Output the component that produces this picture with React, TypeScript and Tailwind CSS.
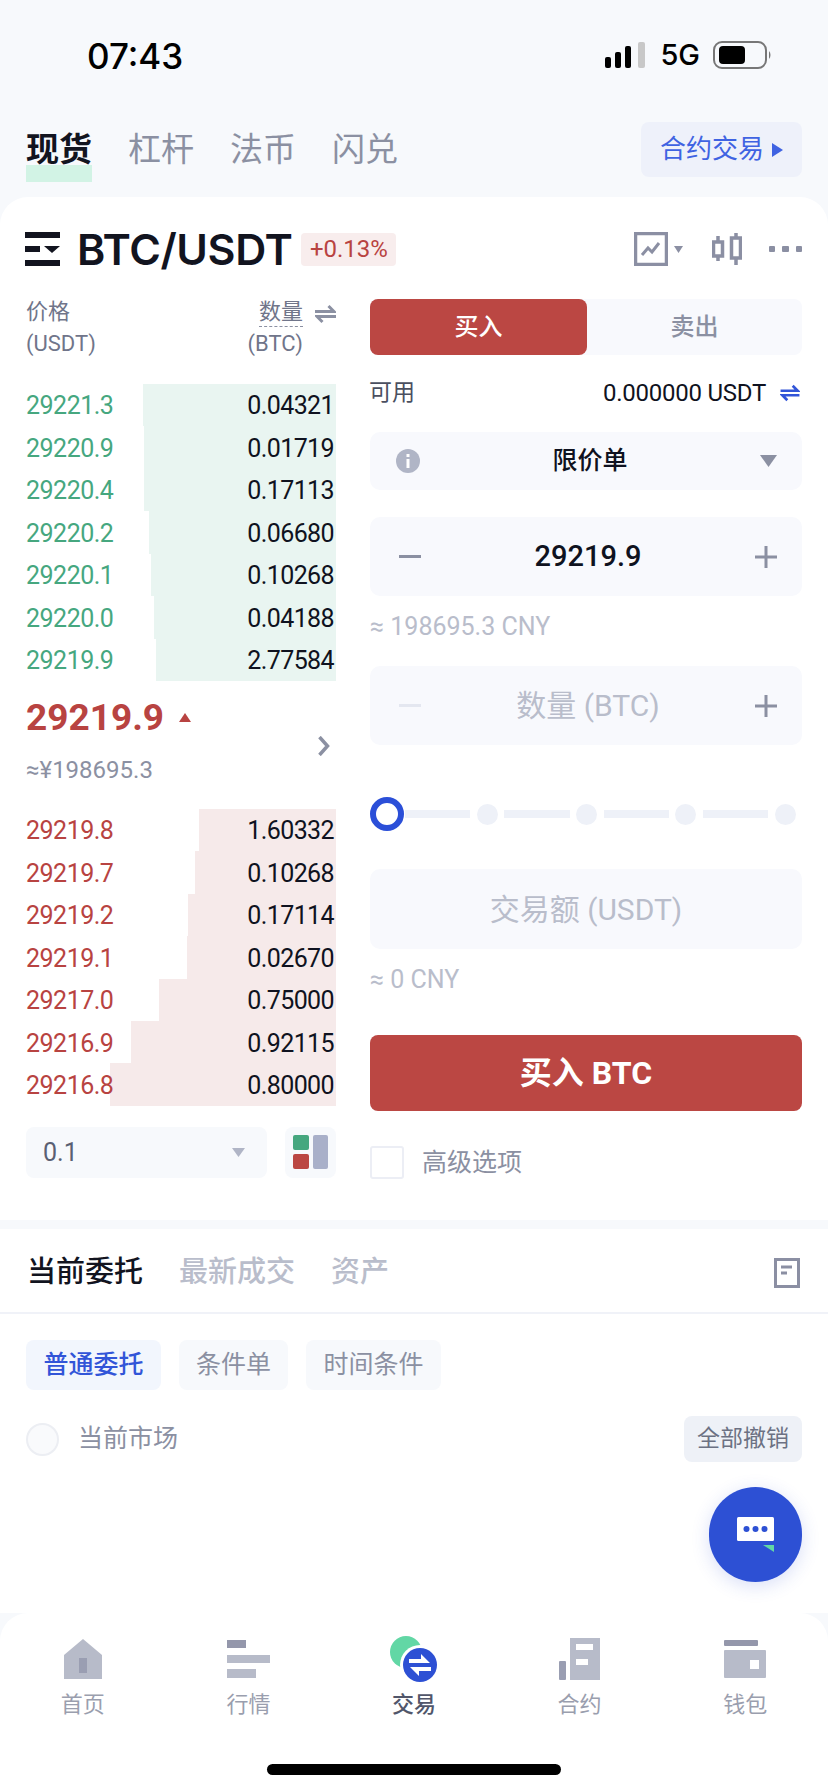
const BIDS = [
  ["29221.3", "0.04321", 193],
  ["29220.9", "0.01719", 192],
  ["29220.4", "0.17113", 192],
  ["29220.2", "0.06680", 187],
  ["29220.1", "0.10268", 185],
  ["29220.0", "0.04188", 182],
  ["29219.9", "2.77584", 180],
] as const;

const ASKS = [
  ["29219.8", "1.60332", 137],
  ["29219.7", "0.10268", 141],
  ["29219.2", "0.17114", 148],
  ["29219.1", "0.02670", 149],
  ["29217.0", "0.75000", 177],
  ["29216.9", "0.92115", 205],
  ["29216.8", "0.80000", 226],
] as const;

const BookRow = ({ price, qty, width, side }: { price: string; qty: string; width: number; side: "bid" | "ask" }) => (
  <div className="relative flex h-[42.43px] items-center justify-between pt-[2px]">
    <div
      className={`absolute inset-y-0 right-0 ${side === "bid" ? "bg-[#e9f5f1]" : "bg-[#f6eaea]"}`}
      style={{ width }}
    />
    <span
      className={`relative text-[25px] tracking-[-0.5px] ${side === "bid" ? "text-[#46a77f]" : "text-[#b84341]"}`}
    >
      {price}
    </span>
    <span className="relative pr-[2px] text-[25px] tracking-[-0.6px] text-[#0f1220]">{qty}</span>
  </div>
);

const Swap = ({ color, className }: { color: string; className: string }) => (
  <svg viewBox="0 0 21 20" className={className} fill="none" stroke={color} strokeWidth="3">
    <path d="M0 7.500h19L13.500 2" />
    <path d="M21 12.500H2L7.500 18" />
  </svg>
);

const Stepper = ({ label, value, muted }: { label?: string; value?: string; muted?: boolean }) => (
  <div className="flex h-[79px] items-center justify-between rounded-[10px] bg-[#f8f9fd] px-[29px] pr-[25px]">
    <span className={`h-[3px] w-[22px] ${muted ? "bg-[#e4e7f0]" : "bg-[#8b90a2]"}`} />
    {value ? (
      <span className="text-[29px] font-medium text-[#0f1220]">{value}</span>
    ) : (
      <span className="text-[30px] text-[#b9bdcb]">{label}</span>
    )}
    <svg viewBox="0 0 22 22" className="h-[22px] w-[22px]" stroke="#8b90a2" strokeWidth="3">
      <path d="M0 11h22M11 0v22" />
    </svg>
  </div>
);

const SliderStop = ({ first }: { first?: boolean }) => (
  <>
    <span className={`h-[8px] flex-1 bg-[#eef1f8] ${first ? "ml-[1px]" : ""}`} />
    <span className="mx-[6.500px] h-[21px] w-[21px] shrink-0 rounded-full bg-[#eef1f8]" />
  </>
);

const NavItem = ({ label, active, icon }: { label: string; active?: boolean; icon: React.ReactNode }) => (
  <div className="flex flex-col items-center">
    <div className="flex h-[48px] w-[90px] items-center justify-center">{icon}</div>
    <span className={`mt-[5px] text-[22px] ${active ? "font-medium text-[#51566a]" : "text-[#9a9eae]"}`}>{label}</span>
  </div>
);

const App = () => {
  return (
    <div className="flex h-[1792px] w-[828px] flex-col overflow-hidden bg-[#f7f9fc] font-[Roboto,'Noto_Sans_CJK_SC',sans-serif]">
      {/* status bar */}
      <div className="flex h-[110px] items-center justify-between pl-[87px] pr-[57px] text-black">
        <span className="pt-[2px] font-[Inter] text-[35px] font-medium">07:43</span>
        <div className="flex items-center">
          <svg viewBox="0 0 40 26" className="h-[26px] w-[40px]">
            <rect x="0" y="15" width="6" height="11" rx="2" fill="#000" />
            <rect x="10" y="10" width="6" height="16" rx="2" fill="#000" />
            <rect x="20" y="4" width="6" height="22" rx="2" fill="#000" />
            <rect x="33" y="0" width="7" height="26" rx="2" fill="#c8c8c8" />
          </svg>
          <span className="ml-[15px] font-[Inter] text-[29px] font-medium">5G</span>
          <svg viewBox="0 0 58 28" className="ml-[13px] h-[28px] w-[58px]">
            <rect x="1" y="1" width="52" height="26" rx="8" fill="none" stroke="#777" strokeWidth="2" />
            <rect x="6" y="5" width="26" height="18" rx="4" fill="#000" />
            <path d="M56 10c2 2 2 6 0 8z" fill="#777" />
          </svg>
        </div>
      </div>

      {/* market tabs */}
      <div className="flex h-[87px] items-start justify-between pl-[26px] pr-[26px] pt-[12px]">
        <div className="flex gap-[36px] pt-[8px] text-[33px] leading-[40px] text-[#8b90a2]">
          <span className="h-[52px] bg-[linear-gradient(transparent_35px,#d2f3e5_35px)] font-bold text-[#12141f]">
            现货
          </span>
          <span>杠杆</span>
          <span>法币</span>
          <span>闪兑</span>
        </div>
        <div className="flex h-[55px] w-[161px] items-center justify-center gap-[8px] rounded-[8px] bg-[#eef1fa] text-[26px] text-[#3f63e2]">
          合约交易
          <svg viewBox="0 0 11 14" className="h-[14px] w-[11px]" fill="#3f63e2">
            <path d="M0 0l11 7-11 7z" />
          </svg>
        </div>
      </div>

      {/* trade card */}
      <div className="h-[1023px] rounded-t-[28px] bg-white px-[26px] pt-[35px]">
        <div className="flex h-[34px] items-center">
          <svg viewBox="0 0 35 34" className="-ml-[1px] h-[34px] w-[35px]" fill="#12141f">
            <rect x="0" y="0" width="35" height="6" />
            <rect x="0" y="14" width="15" height="6" />
            <path d="M19 14h16l-8 7z" />
            <rect x="0" y="28" width="35" height="6" />
          </svg>
          <span className="ml-[17px] font-[Inter] text-[43px] font-semibold tracking-[-0.4px] text-[#12141f]">
            BTC/USDT
          </span>
          <span className="ml-[9px] flex h-[33px] w-[95px] items-center justify-center rounded-[4px] bg-[#f8eded] text-[24px] text-[#b84341]">
            +0.13%
          </span>
          <div className="ml-auto flex items-center">
            <svg viewBox="0 0 34 34" className="h-[34px] w-[34px]" fill="none" stroke="#8b8fa3">
              <rect x="1.500" y="1.500" width="31" height="31" strokeWidth="3.500" />
              <path d="M8 23l6-7 4 4 7-9" strokeWidth="3" />
            </svg>
            <svg viewBox="0 0 9 7" className="ml-[6px] h-[7px] w-[9px]" fill="#8b8fa3">
              <path d="M0 0h9L4.500 7z" />
            </svg>
            <svg viewBox="0 0 30 32" className="ml-[29px] h-[32px] w-[30px]" stroke="#8b8fa3" fill="none" strokeWidth="3.500">
              <rect x="1.500" y="9" width="9" height="14" />
              <path d="M6 3v6M6 23v5" />
              <rect x="19.500" y="5" width="9" height="20" />
              <path d="M24 0v5M24 25v7" />
            </svg>
            <div className="ml-[27px] flex gap-[7px]">
              <span className="h-[6px] w-[6.500px] rounded-[1px] bg-[#8b8fa3]" />
              <span className="h-[6px] w-[6.500px] rounded-[1px] bg-[#8b8fa3]" />
              <span className="h-[6px] w-[6.500px] rounded-[1px] bg-[#8b8fa3]" />
            </div>
          </div>
        </div>

        <div className="mt-[33px] flex gap-[34px]">
          {/* order book */}
          <div className="w-[310px]">
            <div className="flex h-[52px] justify-between text-[22px] leading-[32px] text-[#70758a]">
              <div className="-mt-[3px]">
                <div>价格</div>
                <div>(USDT)</div>
              </div>
              <div className="-mt-[3px] flex">
                <div className="text-right">
                  <div className="inline-block h-[29px] border-b-[1px] border-dashed border-[#8b90a2] leading-[28px]">数量</div>
                  <div>(BTC)</div>
                </div>
                <Swap color="#8b90a2" className="ml-[12px] mt-[8px] h-[20px] w-[21px]" />
              </div>
            </div>
            <div className="mt-[33px]">
              {BIDS.map(([price, qty, width]) => (
                <BookRow key={price} price={price} qty={qty} width={width} side="bid" />
              ))}
            </div>
            <div className="relative h-[128px] pt-[15px]">
              <div className="flex items-center">
                <span className="text-[37px] font-bold leading-[44px] text-[#b84341]">29219.9</span>
                <svg viewBox="0 0 12 9" className="ml-[15px] h-[9px] w-[12px]" fill="#b84341">
                  <path d="M6 0l6 9H0z" />
                </svg>
              </div>
              <div className="mt-[15px] text-[24px] leading-[30px] text-[#8b90a2]">≈¥198695.3</div>
              <svg viewBox="0 0 12 20" className="absolute right-[6px] top-[55px] h-[20px] w-[12px]" fill="none" stroke="#8b90a2" strokeWidth="3.500">
                <path d="M1.500 1l8 9-8 9" />
              </svg>
            </div>
            <div>
              {ASKS.map(([price, qty, width]) => (
                <BookRow key={price} price={price} qty={qty} width={width} side="ask" />
              ))}
            </div>
            <div className="mt-[21px] flex justify-between">
              <div className="flex h-[51px] w-[241px] items-center justify-between rounded-[8px] bg-[#f7f9fc] pl-[17px] pr-[22px] text-[25px] text-[#5a6073]">
                0.1
                <svg viewBox="0 0 13 9" className="h-[9px] w-[13px]" fill="#b0b5c6">
                  <path d="M0 0h13L6.500 9z" />
                </svg>
              </div>
              <div className="flex h-[51px] w-[51px] items-center justify-center gap-[4px] rounded-[8px] bg-[#f7f9fc]">
                <div className="flex flex-col gap-[4px]">
                  <span className="block h-[15px] w-[16px] rounded-[2px] bg-[#46a77f]" />
                  <span className="block h-[15px] w-[16px] rounded-[2px] bg-[#bb4743]" />
                </div>
                <span className="h-[34px] w-[15px] rounded-[2px] bg-[#a9b0c9]" />
              </div>
            </div>
          </div>

          {/* order form */}
          <div className="w-[432px]">
            <div className="flex h-[56px] rounded-[8px] bg-[#f8f9fd] text-[24px]">
              <div className="flex w-[217px] items-center justify-center rounded-[8px] bg-[#bb4743] font-medium text-white">买入</div>
              <div className="flex flex-1 items-center justify-center font-medium text-[#8b90a2]">卖出</div>
            </div>
            <div className="mt-[21px] flex h-[34px] items-center justify-between pr-[2px]">
              <span className="-ml-[1px] text-[23px] text-[#4a4f60]">可用</span>
              <div className="flex items-center">
                <span className="text-[24px] tracking-[-0.25px] text-[#0f1220]">0.000000 USDT</span>
                <Swap color="#3255d8" className="ml-[14px] h-[18px] w-[20px]" />
              </div>
            </div>
            <div className="relative mt-[22px] flex h-[58px] items-center justify-between rounded-[10px] bg-[#f8f9fd] pl-[26px] pr-[25px]">
              <svg viewBox="0 0 24 24" className="h-[24px] w-[24px]">
                <circle cx="12" cy="12" r="12" fill="#b0b5c6" />
                <rect x="10.500" y="10" width="3" height="9" fill="#fff" />
                <rect x="10.500" y="5" width="3" height="3" fill="#fff" />
              </svg>
              <span className="text-[25px] font-medium text-[#0f1220]">限价单</span>
              <svg viewBox="0 0 17 12" className="h-[12px] w-[17px]" fill="#8b90a2">
                <path d="M0 0h17L8.500 12z" />
              </svg>
            </div>
            <div className="mt-[27px]">
              <Stepper value="29219.9" />
            </div>
            <div className="mt-[16px] h-[30px] text-[25px] leading-[30px] text-[#b9bdcb]">≈ 198695.3 CNY</div>
            <div className="mt-[24px]">
              <Stepper label="数量 (BTC)" muted />
            </div>
            <div className="mt-[52px] flex h-[34px] items-center">
              <span className="h-[34px] w-[34px] shrink-0 rounded-full border-[6px] border-[#2b4fd8] bg-white" />
              <SliderStop first />
              <SliderStop />
              <SliderStop />
              <SliderStop />
            </div>
            <div className="mt-[38px] flex h-[80px] items-center justify-center rounded-[10px] bg-[#f8f9fd] text-[30px] text-[#b9bdcb]">
              交易额 (USDT)
            </div>
            <div className="mt-[16px] h-[30px] text-[25px] leading-[30px] text-[#b9bdcb]">≈ 0 CNY</div>
            <div className="mt-[40px] flex h-[76px] items-center justify-center rounded-[8px] bg-[#bb4743] text-[32px] font-bold text-white">
              买入 BTC
            </div>
            <div className="mt-[33px] flex items-center">
              <span className="h-[33px] w-[34px] rounded-[3px] border-[2px] border-[#eceef5]" />
              <span className="ml-[18px] text-[25px] text-[#8b90a2]">高级选项</span>
            </div>
          </div>
        </div>
      </div>

      {/* orders panel */}
      <div className="relative mt-[9px] h-[384px] bg-white">
        <div className="flex h-[85px] items-center justify-between border-b-[2px] border-[#f0f2f8] pl-[27px] pr-[28px] pt-[5px]">
          <div className="flex gap-[36px] text-[29px] text-[#b9bdcb]">
            <span className="font-medium text-[#12141f]">当前委托</span>
            <span className="font-medium">最新成交</span>
            <span className="font-medium">资产</span>
          </div>
          <svg viewBox="0 0 26 30" className="h-[30px] w-[26px]" fill="none" stroke="#8b8fa3" strokeWidth="3">
            <rect x="1.500" y="1.500" width="23" height="27" />
            <path d="M7 9h11M7 15h6" />
          </svg>
        </div>
        <div className="mt-[26px] flex gap-[18px] px-[26px] text-[25px] text-[#8b90a2]">
          <span className="flex h-[50px] w-[135px] items-center justify-center rounded-[8px] bg-[#f2f6fd] font-medium text-[#3255d8]">普通委托</span>
          <span className="flex h-[50px] w-[109px] items-center justify-center rounded-[8px] bg-[#f7f9fc]">条件单</span>
          <span className="flex h-[50px] w-[135px] items-center justify-center rounded-[8px] bg-[#f7f9fc]">时间条件</span>
        </div>
        <div className="mt-[26px] flex items-center justify-between px-[26px]">
          <div className="flex items-center">
            <span className="h-[33px] w-[33px] rounded-full border-[2px] border-[#eceef3] bg-[#f9fafc]" />
            <span className="ml-[19px] text-[25px] text-[#8b90a2]">当前市场</span>
          </div>
          <span className="flex h-[46px] w-[118px] items-center justify-center rounded-[8px] bg-[#eef1f7] text-[23px] text-[#6c7183]">全部撤销</span>
        </div>

        {/* chat button */}
        <div className="absolute left-[709px] top-[258px] flex h-[95px] w-[93px] items-center justify-center rounded-full bg-[#2d50d4] shadow-[0_4px_18px_rgba(45,80,212,0.18)]">
          <svg viewBox="0 0 37 35" className="h-[35px] w-[37px]">
            <rect x="0" y="0" width="37" height="24" rx="1.500" fill="#fff" />
            <circle cx="9.500" cy="12" r="3" fill="#2d50d4" />
            <circle cx="18.500" cy="12" r="3" fill="#2d50d4" />
            <circle cx="27.500" cy="12" r="3" fill="#2d50d4" />
            <path d="M26 28h11v7z" fill="#62d7a5" />
          </svg>
        </div>
      </div>

      {/* bottom nav */}
      <div className="relative flex-1 rounded-t-[28px] bg-white pt-[22px]">
        <div className="grid grid-cols-5">
          <NavItem
            label="首页"
            icon={
              <svg viewBox="0 0 38 40" className="h-[40px] w-[38px]">
                <path d="M19 0l19 16v24H0V16z" fill="#b7bbc9" />
                <rect x="15" y="19" width="8" height="15" fill="#9a9eb2" />
              </svg>
            }
          />
          <NavItem
            label="行情"
            icon={
              <svg viewBox="0 0 43 38" className="h-[38px] w-[43px]">
                <rect x="0" y="0" width="19" height="8" fill="#9497ab" />
                <rect x="0" y="15" width="43" height="8" fill="#b7bbc9" />
                <rect x="0" y="29" width="29" height="9" fill="#b7bbc9" />
              </svg>
            }
          />
          <NavItem
            label="交易"
            active
            icon={
              <svg viewBox="0 0 47 46" className="h-[46px] w-[47px]">
                <circle cx="16" cy="16" r="16" fill="#62d7a5" />
                <circle cx="30" cy="29" r="20" fill="#fff" />
                <circle cx="30" cy="29" r="17" fill="#2d50d4" />
                <path d="M19 23h12v-5l9 9H19z" fill="#fff" />
                <path d="M41 35H29v5l-9-9h21z" fill="#fff" />
              </svg>
            }
          />
          <NavItem
            label="合约"
            icon={
              <svg viewBox="0 0 41 42" className="h-[42px] w-[41px]">
                <rect x="0" y="23" width="7" height="19" rx="1" fill="#9a9eb2" />
                <rect x="11" y="0" width="30" height="42" fill="#b7bbc9" />
                <rect x="17" y="6" width="17" height="6" fill="#fff" />
                <rect x="17" y="21" width="12" height="6" fill="#fff" />
              </svg>
            }
          />
          <NavItem
            label="钱包"
            icon={
              <svg viewBox="0 0 42 38" className="h-[38px] w-[42px]">
                <rect x="0" y="0" width="34" height="6" rx="1" fill="#9497ab" />
                <rect x="0" y="10" width="42" height="28" rx="1" fill="#b7bbc9" />
                <rect x="26" y="20" width="9" height="9" fill="#fff" />
              </svg>
            }
          />
        </div>
        <div className="absolute left-[267px] top-[151px] h-[11px] w-[294px] rounded-full bg-black" />
      </div>
    </div>
  );
};

export default App;
